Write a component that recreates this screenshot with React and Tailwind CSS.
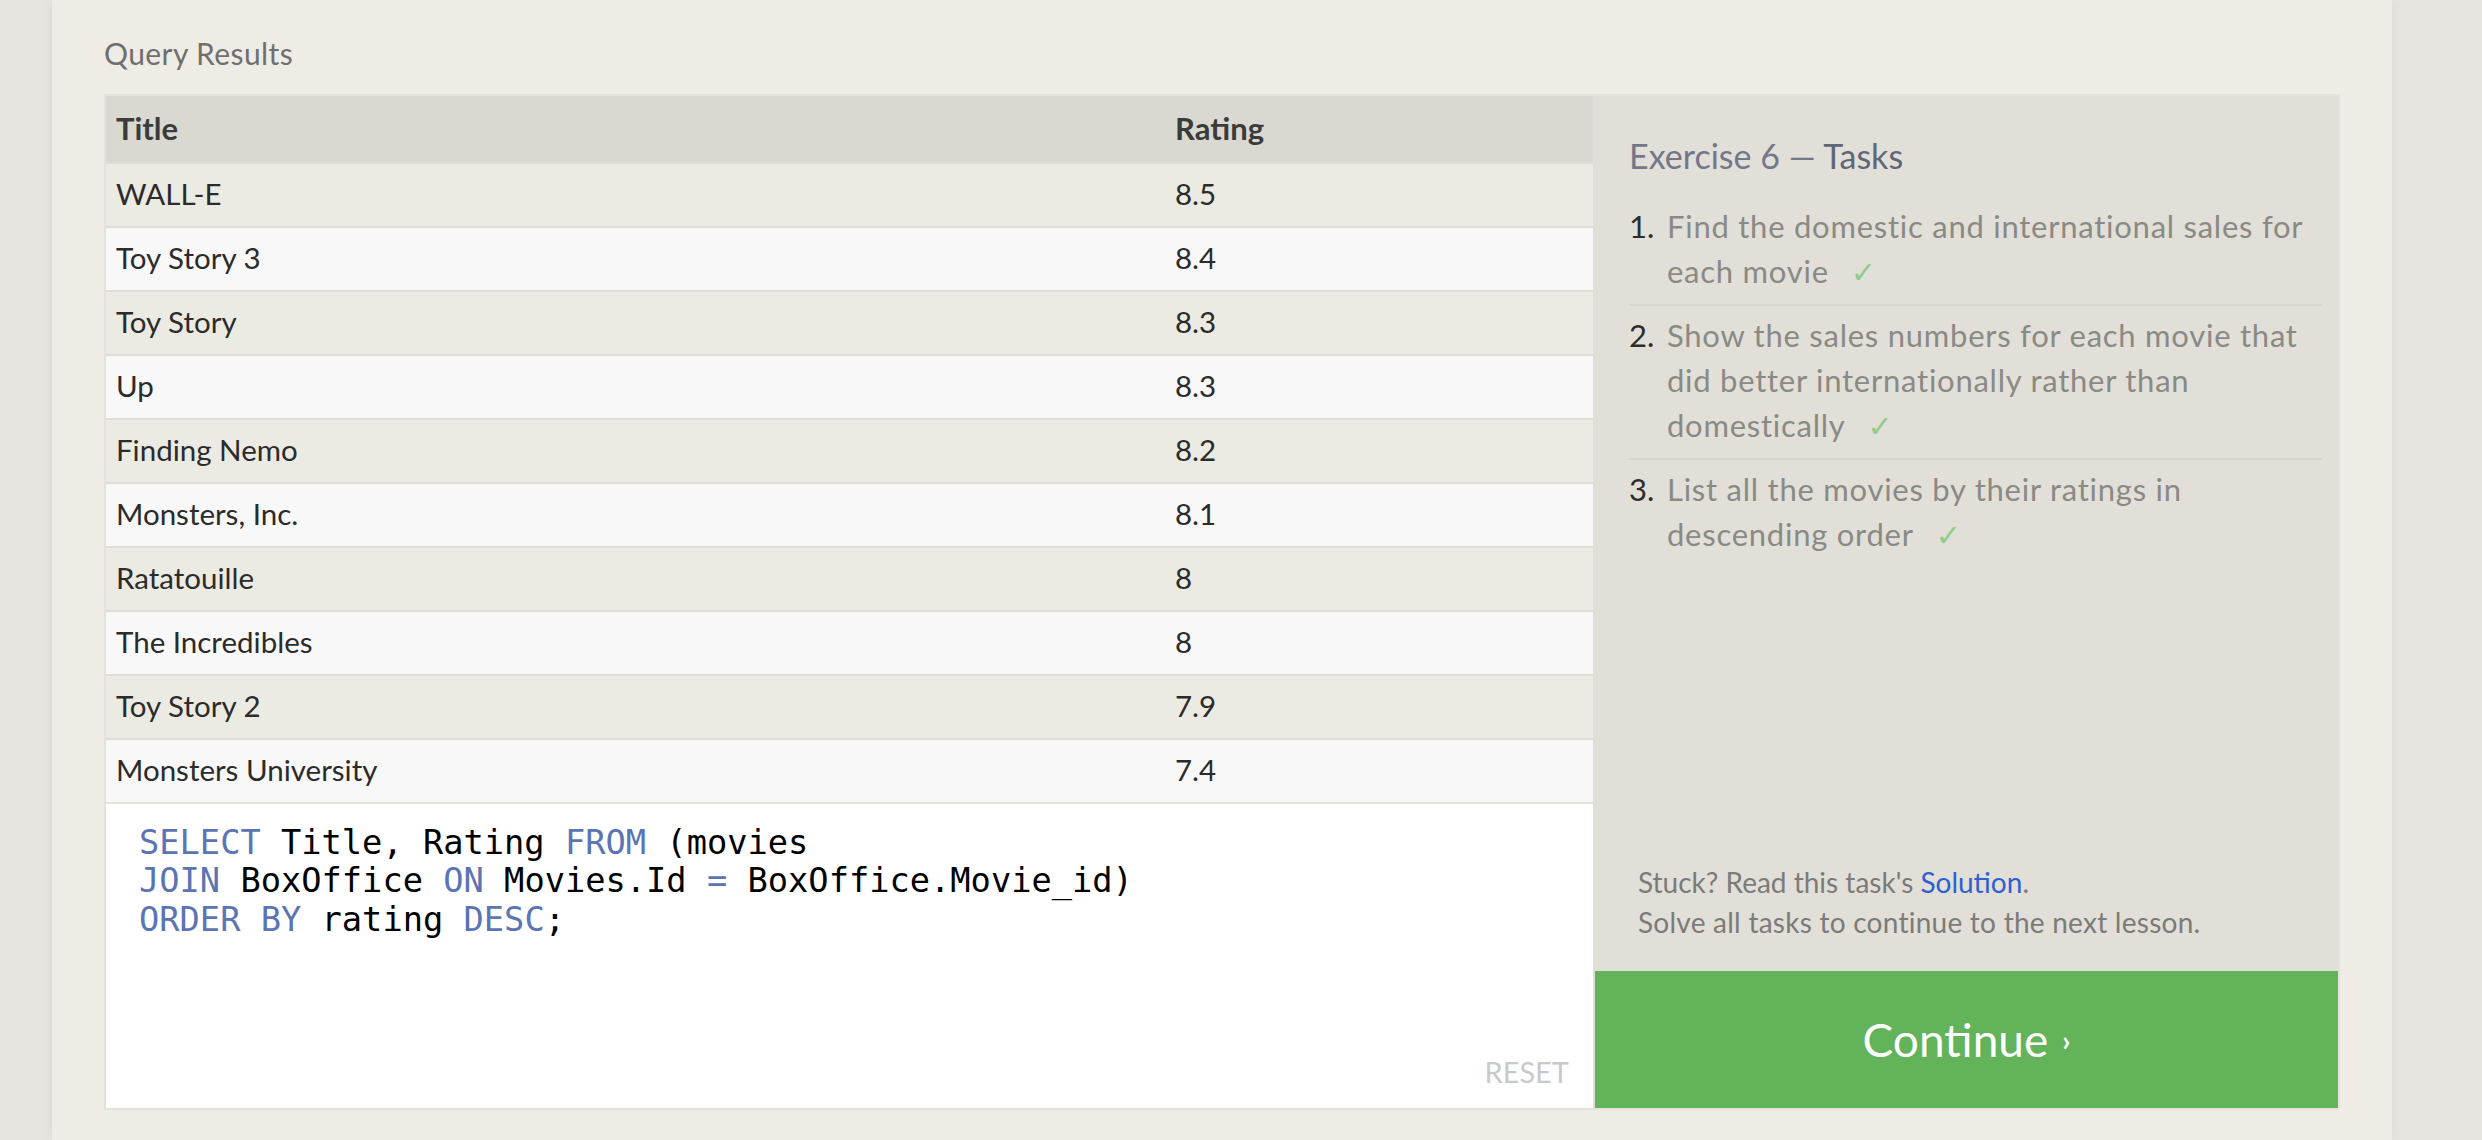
const rows = [
  ['WALL-E', '8.5'],
  ['Toy Story 3', '8.4'],
  ['Toy Story', '8.3'],
  ['Up', '8.3'],
  ['Finding Nemo', '8.2'],
  ['Monsters, Inc.', '8.1'],
  ['Ratatouille', '8'],
  ['The Incredibles', '8'],
  ['Toy Story 2', '7.9'],
  ['Monsters University', '7.4'],
];

const tasks = [
  'Find the domestic and international sales for each movie',
  'Show the sales numbers for each movie that did better internationally rather than domestically',
  'List all the movies by their ratings in descending order',
];

const sans = "font-['Lato',sans-serif]";

function Kw({ children }) {
  return <span className="text-[#5b74b3]">{children}</span>;
}

export default function App() {
  return (
    <div className={`flex h-[1140px] w-full overflow-hidden bg-[#e8e5e1] ${sans}`}>
      <div className="ml-[52px] w-[2340px] h-full bg-[#efece6] px-[52px] shadow-[0_0_12px_rgba(0,0,0,0.06)]">
        <div className="pt-[35px] text-[30px] leading-[36px] tracking-[0.4px] text-[#6f6f6f]">Query Results</div>

        <div className="mt-[23px] flex h-[1016px] border-2 border-[#e3e2dc]">
          {/* results + editor */}
          <div className="flex w-[1487px] flex-col bg-white">
            <div className="grid h-[66px] grid-cols-[1059px_1fr] items-center bg-[#d9d9d1] pb-[1px] text-[31px] font-bold text-[#3b3b3b]">
              <div className="pl-[10px]">Title</div>
              <div className="pl-[10px]">Rating</div>
            </div>
            {rows.map((r, i) => (
              <div
                key={r[0]}
                className={`grid h-[64px] grid-cols-[1059px_1fr] items-center border-t-2 border-[#dfddd7] pb-[2px] text-[29.5px] text-[#2b2b2b] ${
                  i % 2 === 0 ? 'bg-[#ebeae3]' : 'bg-[#f8f8f8]'
                }`}
              >
                <div className="pl-[10px]">{r[0]}</div>
                <div className="pl-[10px]">{r[1]}</div>
              </div>
            ))}

            <div className="relative flex-1 border-t-2 border-[#e6e4de] bg-white pl-[33px] pt-[20px] font-['DejaVu_Sans_Mono',monospace] text-[33.7px] leading-[38.4px] text-black whitespace-pre">
              <div><Kw>SELECT</Kw> Title, Rating <Kw>FROM</Kw> (movies</div>
              <div><Kw>JOIN</Kw> BoxOffice <Kw>ON</Kw> Movies.Id <Kw>=</Kw> BoxOffice.Movie_id)</div>
              <div><Kw>ORDER BY</Kw> rating <Kw>DESC</Kw>;</div>
              <div className={`absolute bottom-[18px] right-[24px] ${sans} text-[29px] leading-[36px] text-[#c9c9c9]`}>RESET</div>
            </div>
          </div>

          {/* tasks panel */}
          <div className="flex flex-1 flex-col border-l-2 border-[#e0ded8] bg-[#e1dfd8]">
            <div className="flex-1 pl-[34px] pr-[16px] pt-[40px]">
              <div className="text-[34px] leading-[40px] text-[#72788a]">
                Exercise 6 — <span className="text-[#5f6678]">Tasks</span>
              </div>
              <ol className="mt-[28px]">
                {tasks.map((t, i) => (
                  <li
                    key={i}
                    className={`flex text-[31px] leading-[45px] ${
                      i < tasks.length - 1 ? 'border-b-2 border-[#d7d5cd] pb-[9px]' : ''
                    } ${i > 0 ? 'pt-[7px]' : ''}`}
                  >
                    <span className="w-[38px] shrink-0 text-[#2d2d2d]">{i + 1}.</span>
                    <span className="tracking-[0.75px] text-[#8a8a85]">
                      {t}
                      <span className="ml-[22px] font-['DejaVu_Sans',sans-serif] text-[30px] text-[#8fcd88]">✓</span>
                    </span>
                  </li>
                ))}
              </ol>
            </div>
            <div className="pl-[43px] pb-[29px] text-[28px] leading-[40px] text-[#7b7b78]">
              <div>
                Stuck? Read this task's <span className="text-[#2f60d2]">Solution</span>.
              </div>
              <div className="tracking-[0.25px]">Solve all tasks to continue to the next lesson.</div>
            </div>
            <div className="flex h-[137px] items-center justify-center bg-[#62b35a] text-white">
              <span className="text-[46px]">Continue</span>
              <span className="ml-[14px] text-[28px] font-bold">›</span>
            </div>
          </div>
        </div>
      </div>
    </div>
  );
}
